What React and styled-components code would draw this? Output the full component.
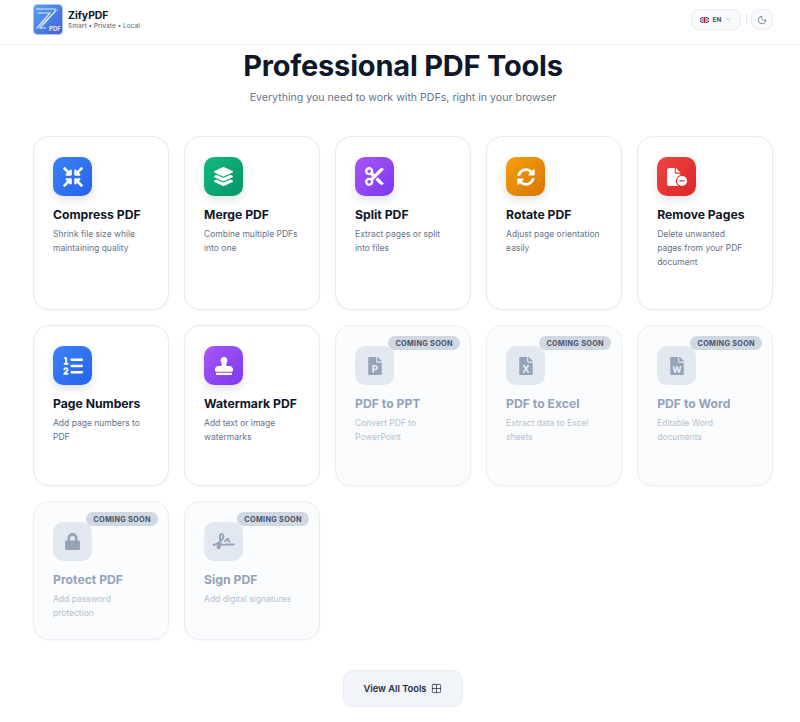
import React from 'react';
import styled, { createGlobalStyle } from 'styled-components';
import { ChevronDown, Grid2x2, Moon } from 'lucide-react';
import {
    FaCompressArrowsAlt,
    FaLayerGroup,
    FaSyncAlt,
    FaStamp,
    FaFilePowerpoint,
    FaFileExcel,
    FaFileWord,
    FaLock,
} from 'react-icons/fa';
import { FaFileCircleMinus, FaListOl, FaScissors } from 'react-icons/fa6';

const GlobalStyle = createGlobalStyle`
    html, body {
        margin: 0;
        padding: 0;
        background: #fff;
    }
    body {
        font-family: Inter, "Open Sans", "Liberation Sans", sans-serif;
        color: #0f172a;
        overflow: hidden;
    }
    * {
        box-sizing: border-box;
    }
`;

const Page = styled.div`
    width: 800px;
    height: 722px;
    display: flex;
    flex-direction: column;
`;

const Header = styled.header`
    height: 45px;
    flex: none;
    border-bottom: 1px solid #f0f2f5;
    padding: 4px 27px 0 33px;
    display: flex;
    justify-content: space-between;
    align-items: flex-start;
`;

const Brand = styled.div`
    display: flex;
    align-items: center;
    gap: 5px;
`;

const BrandText = styled.div`
    display: flex;
    flex-direction: column;
    gap: 1px;
`;

const BrandName = styled.span`
    font-size: 10.4px;
    line-height: 12px;
    font-weight: 700;
    color: #0f172a;
`;

const BrandTag = styled.span`
    font-size: 6.4px;
    line-height: 7px;
    font-weight: 500;
    letter-spacing: 0.1px;
    color: #64748b;
`;

const HeaderActions = styled.div`
    display: flex;
    align-items: center;
    gap: 4.5px;
    padding-top: 5px;
`;

const LangButton = styled.div`
    width: 50px;
    height: 21px;
    border: 1px solid #e8edf3;
    border-radius: 8px;
    background: #f8fafc;
    display: flex;
    align-items: center;
    justify-content: center;
    gap: 4px;
    font-size: 6.5px;
    font-weight: 700;
    color: #475569;
`;

const Divider = styled.div`
    width: 1px;
    height: 11px;
    background: #e2e8f0;
`;

const ThemeButton = styled.div`
    width: 22px;
    height: 21px;
    border: 1px solid #e8edf3;
    border-radius: 8px;
    background: #f8fafc;
    display: flex;
    align-items: center;
    justify-content: center;
    color: #64748b;
`;

const Main = styled.main`
    flex: 1;
    display: flex;
    flex-direction: column;
    align-items: center;
    padding: 0 27px 0 33px;
`;

const Title = styled.h1`
    margin: 1px 0 0;
    font-size: 29px;
    line-height: 40px;
    font-weight: 700;
    letter-spacing: -0.2px;
    color: #0f172a;
`;

const Subtitle = styled.p`
    margin: 5px 0 0;
    font-size: 10.6px;
    line-height: 14px;
    color: #64748b;
`;

const Grid = styled.div`
    width: 100%;
    margin-top: 31px;
    display: grid;
    grid-template-columns: repeat(5, 1fr);
    grid-template-rows: 174px 161px 139px;
    gap: 15px 15.2px;
`;

const Card = styled.div`
    position: relative;
    padding: 20px 19px 0;
    border: 1px solid ${p => (p.$soon ? '#ebeff4' : '#e8ebef')};
    border-radius: 16px;
    background: ${p => (p.$soon ? '#fafcfe' : '#fff')};
    box-shadow: 0 1px 2px rgba(15, 23, 42, 0.04);
`;

const IconBox = styled.div`
    width: 39px;
    height: 39px;
    border-radius: 10px;
    display: flex;
    align-items: center;
    justify-content: center;
    color: ${p => (p.$soon ? '#94a3b8' : '#fff')};
    background: ${p => (p.$soon ? '#e2e8f0' : `linear-gradient(135deg, ${p.$from}, ${p.$to})`)};
    box-shadow: ${p => (p.$soon ? 'none' : '0 4px 8px rgba(15, 23, 42, 0.12)')};
`;

const CardTitle = styled.h3`
    margin: 10.5px 0 0;
    font-size: 12.2px;
    line-height: 16px;
    font-weight: 700;
    white-space: nowrap;
    color: ${p => (p.$soon ? '#94a3b8' : '#0f172a')};
`;

const CardText = styled.p`
    margin: 4.5px 0 0;
    font-size: 8.5px;
    line-height: 14px;
    color: ${p => (p.$soon ? '#b6c0ce' : '#64748b')};
`;

const Badge = styled.span`
    position: absolute;
    top: 10px;
    right: 10px;
    height: 14px;
    padding: 0 7px;
    border-radius: 7px;
    background: #d0d8e3;
    display: flex;
    align-items: center;
    font-size: 7.3px;
    font-weight: 700;
    letter-spacing: 0.3px;
    white-space: nowrap;
    color: #475569;
`;

const ViewAll = styled.button`
    margin-top: 30px;
    width: 120px;
    height: 37px;
    border: 1px solid #e8edf3;
    border-radius: 10px;
    background: #f1f5f9;
    display: flex;
    align-items: center;
    justify-content: center;
    gap: 5px;
    font-family: inherit;
    font-size: 9.3px;
    font-weight: 600;
    color: #1e293b;
`;

const SignIcon = () => (
    <svg width="23" height="17" viewBox="0 0 23 17" fill="none" stroke="currentColor" strokeWidth="1.9" strokeLinecap="round">
        <path d="M1.5 12C5 11 9 9 11 5C12 3 11 1 9.5 1C8 1 7.5 3 8 6C8.5 9 9 13 7 15C6 15.8 4.8 14 6 12.5C7 11.3 10 11 12 12" />
        <path d="M13 8C14 8 15 6 16 6C16.6 7 16 8.5 17.5 8.5" />
        <path d="M13.5 11.5H22" />
    </svg>
);

const tools = [
    { name: 'Compress PDF', text: <>Shrink file size while<br />maintaining quality</>, Icon: FaCompressArrowsAlt, size: 20, from: '#3b82f6', to: '#2563eb' },
    { name: 'Merge PDF', text: <>Combine multiple PDFs<br />into one</>, Icon: FaLayerGroup, size: 19, from: '#10b981', to: '#059669' },
    { name: 'Split PDF', text: <>Extract pages or split<br />into files</>, Icon: FaScissors, size: 19, from: '#a855f7', to: '#7c3aed' },
    { name: 'Rotate PDF', text: <>Adjust page orientation<br />easily</>, Icon: FaSyncAlt, size: 18, from: '#f59e0b', to: '#d97706' },
    { name: 'Remove Pages', text: <>Delete unwanted<br />pages from your PDF<br />document</>, Icon: FaFileCircleMinus, size: 20, from: '#ef4444', to: '#dc2626' },
    { name: 'Page Numbers', text: <>Add page numbers to<br />PDF</>, Icon: FaListOl, size: 20, from: '#3b82f6', to: '#2563eb' },
    { name: 'Watermark PDF', text: <>Add text or image<br />watermarks</>, Icon: FaStamp, size: 18, from: '#a855f7', to: '#7c3aed' },
    { name: 'PDF to PPT', text: <>Convert PDF to<br />PowerPoint</>, Icon: FaFilePowerpoint, size: 18, soon: true },
    { name: 'PDF to Excel', text: <>Extract data to Excel<br />sheets</>, Icon: FaFileExcel, size: 18, soon: true },
    { name: 'PDF to Word', text: <>Editable Word<br />documents</>, Icon: FaFileWord, size: 18, soon: true },
    { name: 'Protect PDF', text: <>Add password<br />protection</>, Icon: FaLock, size: 17, soon: true },
    { name: 'Sign PDF', text: <>Add digital signatures</>, Icon: SignIcon, soon: true },
];

const Logo = () => (
    <svg width="30" height="31" viewBox="0 0 30 31">
        <defs>
            <linearGradient id="logoBg" x1="0" y1="0" x2="1" y2="1">
                <stop offset="0" stopColor="#5aa2ee" />
                <stop offset="1" stopColor="#3f5fd8" />
            </linearGradient>
        </defs>
        <rect x="0.5" y="0.5" width="29" height="30" rx="4" fill="url(#logoBg)" stroke="#a9c4ee" />
        <path d="M3 5h19v2.5L7 24h6M5 9h12L4 24" fill="none" stroke="#dbe9fb" strokeWidth="1.2" />
        <path d="M3 25 25 5" fill="none" stroke="#cfe2fa" strokeWidth="0.8" />
        <text x="16" y="27" fontFamily="Inter, sans-serif" fontSize="6" fontWeight="700" fill="#dfeaff">PDF</text>
    </svg>
);

const Flag = () => (
    <svg width="9" height="6" viewBox="0 0 9 6">
        <rect width="9" height="6" fill="#2b3f87" />
        <path d="M0 0l9 6M9 0L0 6" stroke="#fff" strokeWidth="1" />
        <path d="M4.5 0v6M0 3h9" stroke="#fff" strokeWidth="2" />
        <path d="M4.5 0v6M0 3h9" stroke="#c8102e" strokeWidth="1" />
    </svg>
);

export default function App() {
    return (
        <Page>
            <GlobalStyle />
            <Header>
                <Brand>
                    <Logo />
                    <BrandText>
                        <BrandName>ZifyPDF</BrandName>
                        <BrandTag>Smart • Private • Local</BrandTag>
                    </BrandText>
                </Brand>
                <HeaderActions>
                    <LangButton>
                        <Flag />
                        EN
                        <ChevronDown size={7} color="#94a3b8" />
                    </LangButton>
                    <Divider />
                    <ThemeButton>
                        <Moon size={10} />
                    </ThemeButton>
                </HeaderActions>
            </Header>
            <Main>
                <Title>Professional PDF Tools</Title>
                <Subtitle>Everything you need to work with PDFs, right in your browser</Subtitle>
                <Grid>
                    {tools.map(({ name, text, Icon, size, from, to, soon }) => (
                        <Card key={name} $soon={soon}>
                            {soon && <Badge>COMING SOON</Badge>}
                            <IconBox $soon={soon} $from={from} $to={to}>
                                <Icon size={size} />
                            </IconBox>
                            <CardTitle $soon={soon}>{name}</CardTitle>
                            <CardText $soon={soon}>{text}</CardText>
                        </Card>
                    ))}
                </Grid>
                <ViewAll>
                    View All Tools
                    <Grid2x2 size={11} strokeWidth={1.6} />
                </ViewAll>
            </Main>
        </Page>
    );
}
